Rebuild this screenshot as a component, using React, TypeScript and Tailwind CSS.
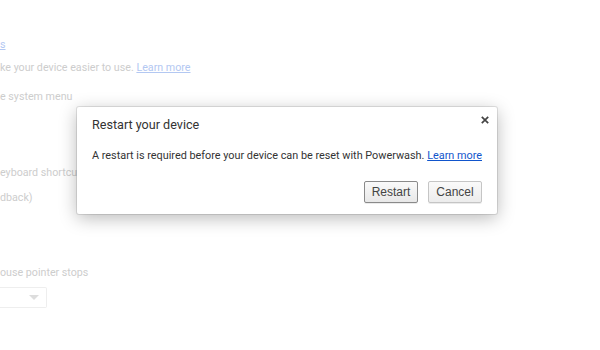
import React from 'react';

export default function App() {
  return (
    <div className="relative h-[350px] w-[600px] overflow-hidden bg-white font-['Roboto',sans-serif]">
      <div className="flex flex-col text-[10.7px] leading-[14px] text-[#cdcdcd]">
        <span className="mt-[38px] text-[#b3c8f2] underline">s</span>
        <div className="mt-[9px]">
          ke your device easier to use. <span className="text-[#b3c8f2] underline">Learn more</span>
        </div>
        <div className="mt-[15px]">e system menu</div>
        <div className="mt-[62px]">eyboard shortcu</div>
        <div className="mt-[11px]">dback)</div>
        <div className="mt-[61px]">ouse pointer stops</div>
        <div className="mt-[7px] flex h-[21px] w-[47px] items-center justify-end rounded-r-[2px] border border-l-0 border-[#eeeeee] pr-[7px]">
          <span className="h-0 w-0 border-x-[5px] border-t-[5px] border-x-transparent border-t-[#dddddd]" />
        </div>
      </div>

      <div className="absolute left-[77px] top-[107px] w-[420px] rounded-[2px] bg-white pb-[11px] shadow-[0_4px_18px_rgba(0,0,0,0.28)] ring-1 ring-black/10">
        <div className="flex items-start justify-between pl-[15px] pr-[6px] pt-[10px]">
          <h1 className="text-[12.6px] leading-[16px] text-[#333]">Restart your device</h1>
          <button className="-mt-[3px] flex h-[12px] w-[12px] items-center justify-center">
            <svg width="8" height="8" viewBox="0 0 8 8">
              <path d="M0.8 0.8 L7.2 7.2 M7.2 0.8 L0.8 7.2" stroke="#444" strokeWidth="1.7" />
            </svg>
          </button>
        </div>
        <p className="mt-[15px] whitespace-nowrap pl-[15px] text-[10.85px] leading-[16px] text-[#333]">
          A restart is required before your device can be reset with Powerwash.{' '}
          <a className="text-[#1155cc] underline">Learn more</a>
        </p>
        <div className="mt-[17px] flex justify-end gap-[10px] pr-[15px] font-['Liberation_Sans',sans-serif] text-[12px] text-[#444]">
          <button className="h-[22px] w-[54px] rounded-[2px] border border-[#8a8a8a] bg-gradient-to-b from-[#fafafa] to-[#e8e8e8] shadow-[0_1px_0_rgba(0,0,0,0.08)]">
            Restart
          </button>
          <button className="h-[22px] w-[54px] rounded-[2px] border border-[#c5c5c5] bg-gradient-to-b from-[#fafafa] to-[#ececec] shadow-[0_1px_0_rgba(0,0,0,0.08)]">
            Cancel
          </button>
        </div>
      </div>
    </div>
  );
}
